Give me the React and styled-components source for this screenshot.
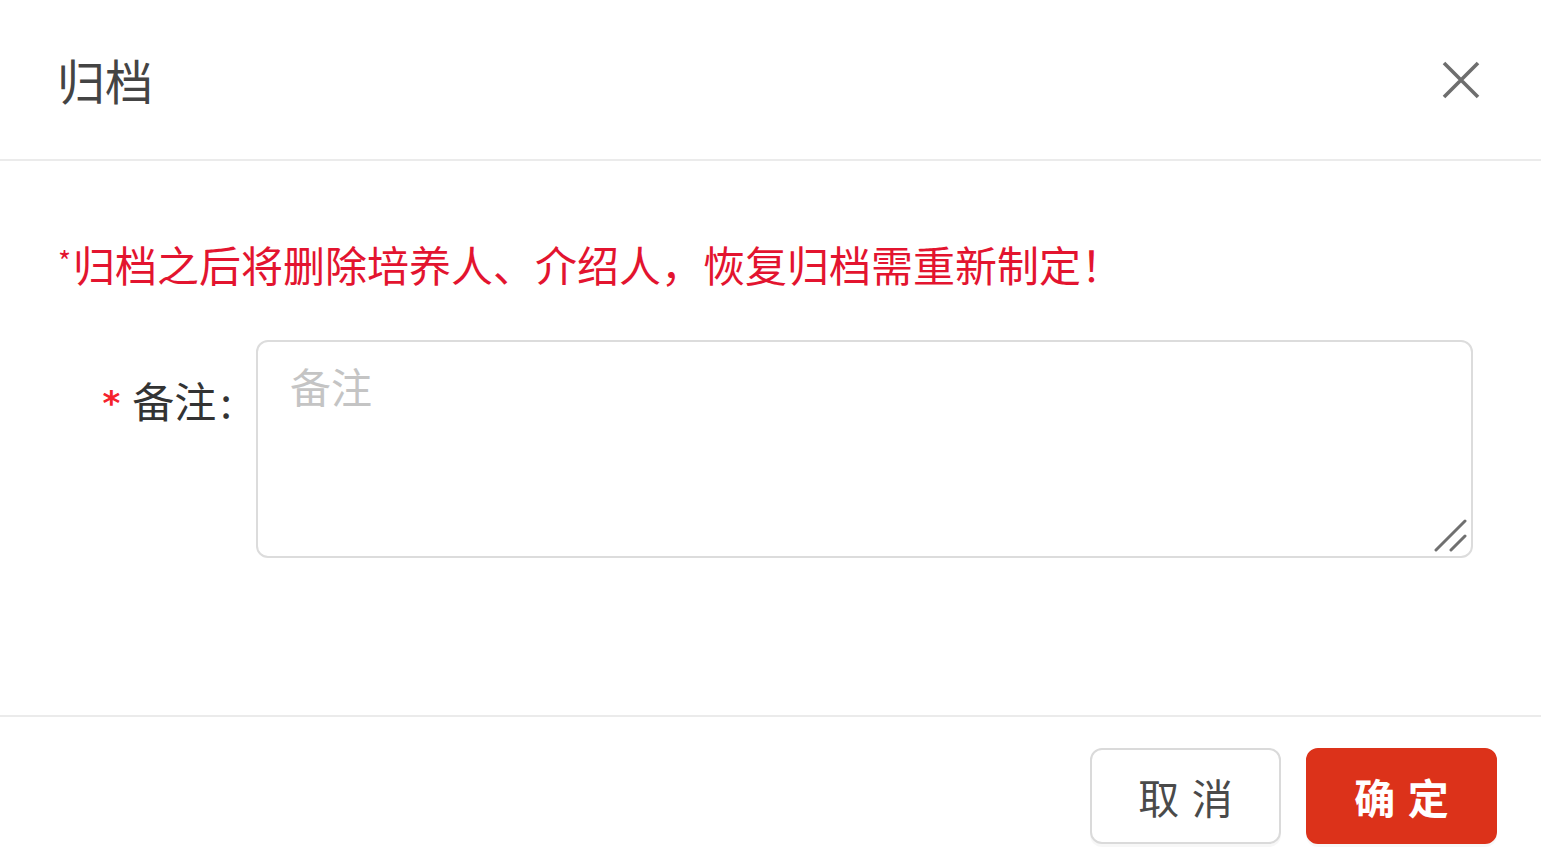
import React from "react";
import styled, { createGlobalStyle } from "styled-components";

const Global = createGlobalStyle`
  html, body { margin: 0; padding: 0; background: #fff; }
  body { font-family: "Noto Sans CJK SC", "Noto Sans", sans-serif; }
  * { box-sizing: border-box; }
`;

const Modal = styled.div`
  width: 1541px;
  height: 857px;
  overflow: hidden;
  display: flex;
  flex-direction: column;
  background: #fff;
`;

const Header = styled.div`
  height: 161px;
  display: flex;
  align-items: center;
  justify-content: space-between;
  padding: 0 60px 0 57px;
  border-bottom: 2px solid #ebebeb;
`;

const Title = styled.div`
  font-size: 48px;
  line-height: 1;
  color: #444;
  margin-top: -2px;
`;

const CloseBtn = styled.button`
  width: 40px;
  height: 40px;
  padding: 0;
  border: none;
  background: transparent;
  display: flex;
  align-items: center;
  justify-content: center;
  cursor: pointer;
`;

const Body = styled.div`
  padding: 68px 68px 0 58px;
  height: 554px;
  display: flex;
  flex-direction: column;
`;

const Warning = styled.div`
  font-size: 42px;
  line-height: 63px;
  color: #e3142f;
  white-space: nowrap;
`;

const Star = styled.span`
  font-size: 28px;
  vertical-align: 10px;
  margin-right: 2px;
`;

const FormRow = styled.div`
  display: flex;
  align-items: flex-start;
  margin-top: 45px;
`;

const Label = styled.label`
  width: 198px;
  flex-shrink: 0;
  display: flex;
  justify-content: flex-end;
  align-items: center;
  padding-right: 24px;
  padding-top: 8px;
  height: 110px;
  font-size: 42px;
  color: #333;
  white-space: nowrap;
`;

const Required = styled.span`
  color: #f5222d;
  font-family: "DejaVu Sans", sans-serif;
  font-weight: 700;
  font-size: 34px;
  margin-right: 12px;
  margin-top: 8px;
`;

const Colon = styled.span`
  margin-left: 4px;
`;

const AreaWrap = styled.div`
  position: relative;
  flex: 1;
  height: 218px;
`;

const TextArea = styled.textarea`
  width: 100%;
  height: 100%;
  display: block;
  resize: none;
  border: 2px solid #dcdcdc;
  border-radius: 12px;
  padding: 12px 32px;
  font-family: "Noto Sans CJK SC", sans-serif;
  font-size: 41px;
  line-height: 62px;
  color: #333;
  outline: none;
  &::placeholder { color: #c4c4c4; }
`;

const Grip = styled.svg`
  position: absolute;
  right: 5px;
  bottom: 5px;
  pointer-events: none;
`;

const Footer = styled.div`
  border-top: 2px solid #ebebeb;
  display: flex;
  justify-content: flex-end;
  gap: 25px;
  padding: 31px 44px 0 0;
`;

const Button = styled.button`
  width: 191px;
  height: 96px;
  border-radius: 12px;
  font-family: "Noto Sans CJK SC", sans-serif;
  font-size: 41px;
  letter-spacing: 0.3em;
  text-indent: 0.3em;
  display: flex;
  align-items: center;
  justify-content: center;
  cursor: pointer;
  border: 2px solid ${(p) => (p.$primary ? "#dc321a" : "#dadada")};
  background: ${(p) => (p.$primary ? "#dc321a" : "#fff")};
  color: ${(p) => (p.$primary ? "#fff" : "#4a4a4a")};
  font-weight: ${(p) => (p.$primary ? 700 : 400)};
  box-shadow: 0 3px 0 rgba(0, 0, 0, 0.03);
`;

export default function App() {
  return (
    <>
      <Global />
      <Modal>
        <Header>
          <Title>归档</Title>
          <CloseBtn aria-label="close">
            <svg width="38" height="38" viewBox="0 0 38 38">
              <path d="M2 2 L36 36 M36 2 L2 36" stroke="#6e6e6e" strokeWidth="3.6" fill="none" />
            </svg>
          </CloseBtn>
        </Header>
        <Body>
          <Warning>
            <Star>*</Star>归档之后将删除培养人、介绍人，恢复归档需重新制定！
          </Warning>
          <FormRow>
            <Label>
              <Required>*</Required>
              备注<Colon>:</Colon>
            </Label>
            <AreaWrap>
              <TextArea placeholder="备注" />
              <Grip width="34" height="34" viewBox="0 0 34 34">
                <path d="M2 31 L31 2 M17 31 L31 17" stroke="#707070" strokeWidth="3" strokeLinecap="round" fill="none" />
              </Grip>
            </AreaWrap>
          </FormRow>
        </Body>
        <Footer>
          <Button>取消</Button>
          <Button $primary>确定</Button>
        </Footer>
      </Modal>
    </>
  );
}
